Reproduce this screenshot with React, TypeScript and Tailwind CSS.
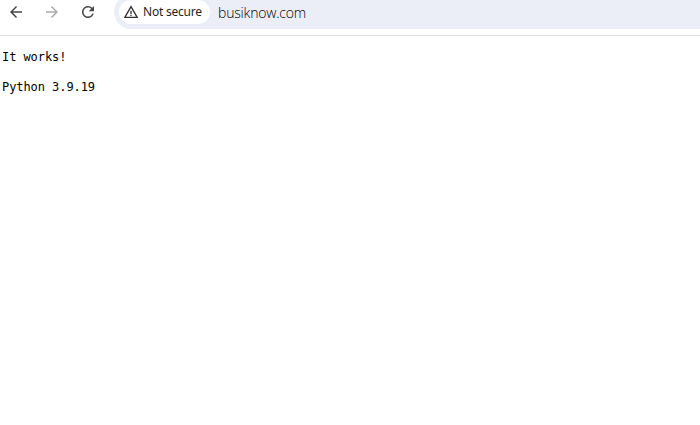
import React from "react";
import { MdArrowBack, MdArrowForward, MdRefresh, MdWarningAmber } from "react-icons/md";

function Toolbar() {
  return (
    <header className="h-9 overflow-hidden border-b border-[#dfe0e3] bg-white">
      <div className="-mt-[5px] flex h-[34px] items-center">
        <nav className="flex w-[114px] shrink-0 gap-[18px] pl-[7px]">
          <MdArrowBack className="size-[18px] text-[#474747]" />
          <MdArrowForward className="size-[18px] text-[#ababab]" />
          <MdRefresh className="size-[18px] text-[#474747]" />
        </nav>
        <div className="flex h-[34px] flex-1 items-center rounded-l-full bg-[#ebeef7] pl-[5px]">
          <div className="flex h-6 w-[91px] items-center rounded-full bg-white pl-1">
            <MdWarningAmber className="size-4 shrink-0 text-[#333]" />
            <span className="ml-1 whitespace-nowrap font-['Noto_Sans',sans-serif] text-[12px] leading-4 tracking-[-0.22px] text-[#1f1f1f]">
              Not secure
            </span>
          </div>
          <span className="ml-2 whitespace-nowrap pt-px font-['Open_Sans',sans-serif] text-[14px] font-light leading-5 tracking-[-0.18px] text-black">
            busiknow.com
          </span>
        </div>
      </div>
    </header>
  );
}

export default function App() {
  return (
    <div className="h-[425px] w-[700px] overflow-hidden bg-white">
      <Toolbar />
      <pre className="pl-[2px] pt-[14px] font-['DejaVu_Sans_Mono',monospace] text-[12px] leading-[15px] tracking-[-0.07px] text-black">
        {"It works!\n\nPython 3.9.19"}
      </pre>
    </div>
  );
}
